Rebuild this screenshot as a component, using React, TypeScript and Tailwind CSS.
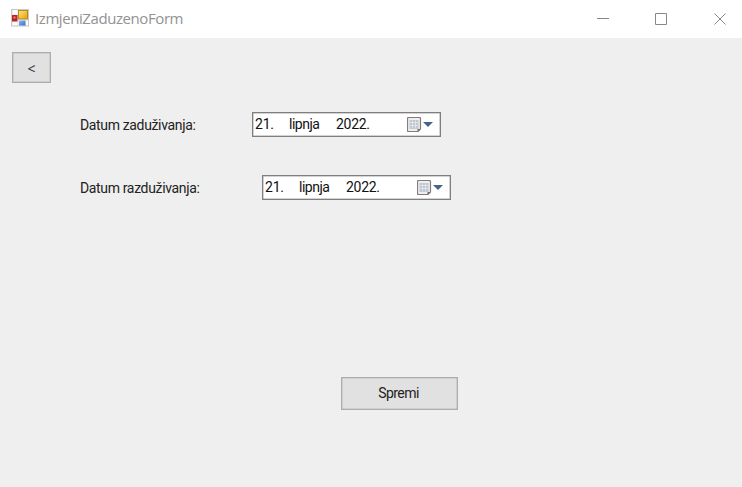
import React from "react";

function FormIcon() {
  return (
    <svg className="ml-[11px] mt-[9px] h-[18px] w-[18px] shrink-0" viewBox="0 0 18 18">
      <defs>
        <linearGradient id="gold" x1="0" y1="0" x2="1" y2="1">
          <stop offset="0" stopColor="#ffe486" />
          <stop offset="1" stopColor="#dfa006" />
        </linearGradient>
        <linearGradient id="blue" x1="0" y1="0" x2="1" y2="1">
          <stop offset="0" stopColor="#8dbafa" />
          <stop offset="1" stopColor="#346bce" />
        </linearGradient>
      </defs>
      <rect x="0.5" y="0.5" width="17" height="16.5" fill="#ededee" stroke="#c8c8c9" />
      <path d="M2 1.5h4v3.5H2zM2 12.5h4v3.5H2zM15 12h2v4h-2z" fill="#fff" />
      <rect x="1" y="6" width="5.5" height="6.5" fill="#b92520" />
      <rect x="2.5" y="7.5" width="2" height="2" fill="#e88a7d" />
      <rect x="7.5" y="1.5" width="9" height="8.5" fill="url(#gold)" stroke="#b98c18" />
      <rect x="8" y="11.5" width="6.5" height="5" fill="url(#blue)" />
    </svg>
  );
}

function DatePicker() {
  return (
    <div className="flex h-[25px] w-[189px] items-start border border-[#7f7f7f] bg-white pl-[2px] text-[#111] shadow-[inset_0_0_0_0.5px_#a8a8a8]">
      <span className="w-[34px] whitespace-nowrap leading-[23px] tracking-[-0.2px]">21.</span>
      <span className="w-[47px] whitespace-nowrap leading-[23px] tracking-[-0.5px]">lipnja</span>
      <span className="w-[71px] whitespace-nowrap leading-[23px] tracking-[-0.3px]">2022.</span>
      <svg className="mt-[4px] h-[16px] w-[27px] shrink-0" viewBox="0 0 27 16">
        <path d="M1.500 .5h11q1 0 1 1v10.500l-2.500 2.500h-9.500q-1 0-1-1v-12q0-1 1-1z" fill="#f0eeee" stroke="#847b7d" strokeWidth="1.200" />
        <rect x="2.500" y="3" width="9" height="9" fill="#bfc7d2" />
        <path d="M3 5.500h8M3 8.500h8M5.500 3.500v8M8.500 3.500v8" stroke="#e6e9ee" strokeWidth=".8" />
        <path d="M10.500 15v-3h3z" fill="#756a68" />
        <path d="M16 5h10l-5 5z" fill="#47618f" />
      </svg>
    </div>
  );
}

export default function App() {
  return (
    <main className="flex h-[487px] w-[742px] flex-col overflow-hidden bg-[#efefef] font-['Roboto','Liberation_Sans',sans-serif] text-[14px] text-[#222]">
      <header className="flex h-[38px] shrink-0 bg-white">
        <FormIcon />
        <h1 className="ml-[6px] flex-1 whitespace-nowrap font-['Open_Sans','Noto_Sans',sans-serif] text-[15px] font-normal leading-[37px] tracking-[-0.42px] text-[#929292]">
          IzmjeniZaduzenoForm
        </h1>
        <svg className="mt-[12px] h-[14px] w-[145px] shrink-0" viewBox="0 0 145 14" fill="none" stroke="#888">
          <path d="M0 6.500h12" />
          <path d="M58.500 1.500h11v11h-11z" />
          <path d="m117.500 1.500 11 11m0-11-11 11" />
        </svg>
      </header>
      <section className="flex flex-1 flex-col">
        <button className="ml-[12px] mt-[14px] h-[31px] w-[39px] shrink-0 border border-[#adadad] bg-[#e1e1e1] font-['Open_Sans',sans-serif] text-[14px] leading-[31px] text-[#333] shadow-[inset_0_0_0_0.5px_#bdbdbd]">
          &lt;
        </button>
        <div className="mt-[29px] flex h-[25px]">
          <label className="ml-[80px] w-[172px] whitespace-nowrap leading-[27px] tracking-[-0.35px]">Datum zaduživanja:</label>
          <DatePicker />
        </div>
        <div className="mt-[38px] flex h-[25px]">
          <label className="ml-[80px] w-[182px] whitespace-nowrap leading-[27px] tracking-[-0.35px]">Datum razduživanja:</label>
          <DatePicker />
        </div>
        <button className="ml-[341px] mt-[177px] h-[33px] w-[117px] shrink-0 border border-[#adadad] bg-[#e1e1e1] pr-[2px] leading-[31px] tracking-[-0.55px] shadow-[inset_0_0_0_0.5px_#bdbdbd]">
          Spremi
        </button>
      </section>
    </main>
  );
}
